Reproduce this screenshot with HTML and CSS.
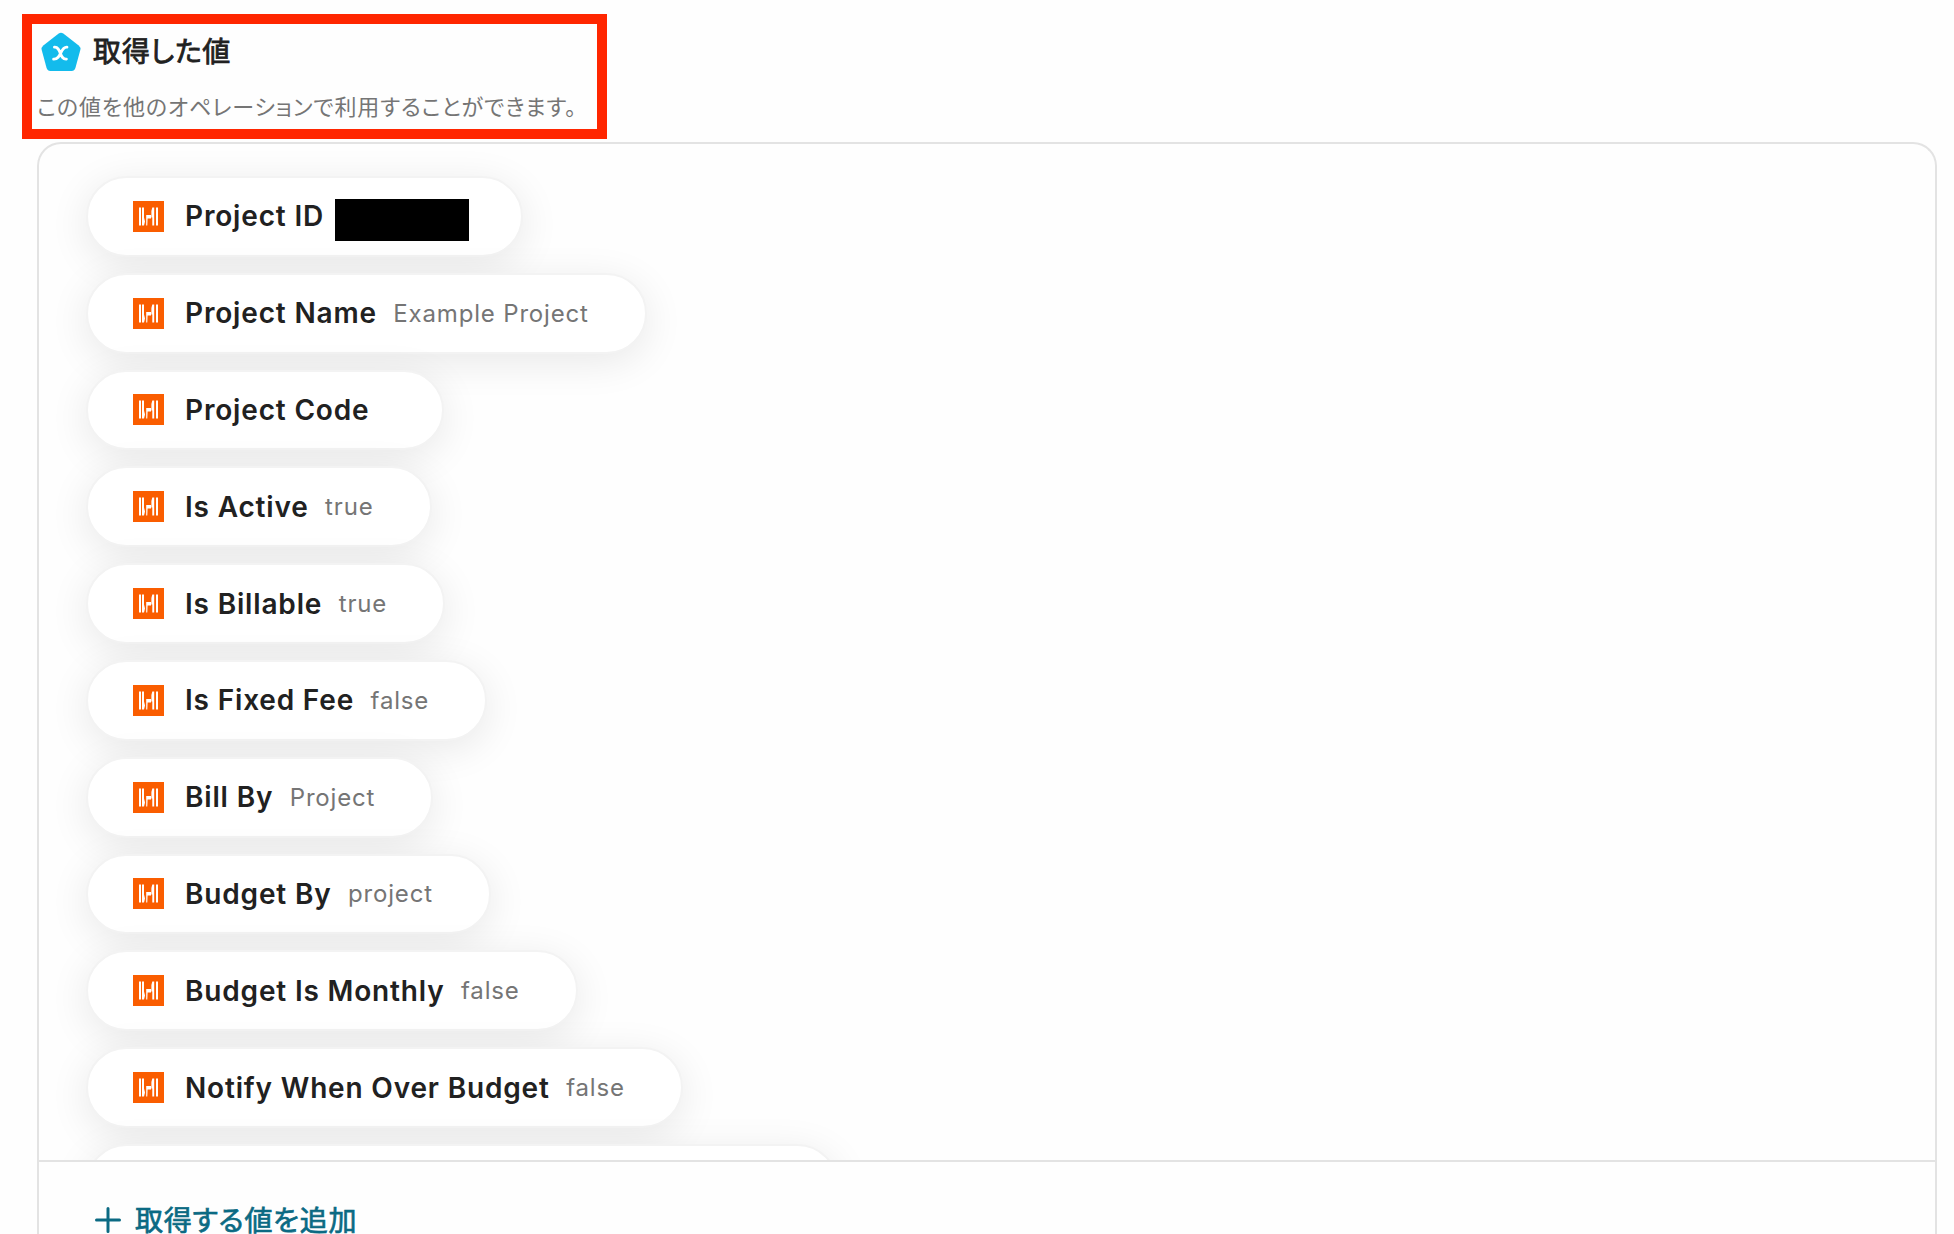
FILE: index.html
```html
<!DOCTYPE html>
<html lang="ja">
<head>
    <meta charset="UTF-8">
    <title>取得した値</title>
    <link rel="stylesheet" href="styles.css">
</head>
<body>
    <!-- Icon shared by every value -->
    <svg class="sprite" width="0" height="0">
        <symbol id="harvest" viewBox="0 0 31 31">
            <rect width="31" height="31" fill="#fa5d00"/>
            <path fill="#fff" d="M6 6.5h2v18H6zM9 6.5h2v10l1 4-1 4H9zM13.2 14h4.8v3.5h-3.4l-.3 7h-1.1zM18.4 10l.9-3.5h1.9v18h-1.9v-8h-.9zM23 6.5h2v18h-2z"/>
        </symbol>
    </svg>

    <div class="header">
        <div class="title">
            <svg class="logo" width="40" height="40" viewBox="0 0 40 40">
                <path fill="#13bbec" d="M17.7 1.6q2.3-1.6 4.6 0l15.4 11.9q2.2 1.8 1.6 4.5l-4.9 18q-.9 2.9-3.8 3H9.4q-2.9-.1-3.8-3L.7 18q-.6-2.7 1.6-4.5z"/>
                <path fill="none" stroke="#fff" stroke-width="2.8" stroke-linecap="round" d="M13.4 15.2c7-.6 4.6 12.4 12 12M26 15.2c-7-.6-5.4 12.4-13.4 12"/>
            </svg>
            <span>取得した値</span>
        </div>
        <div class="description">この値を他のオペレーションで利用することができます。</div>
    </div>

    <div class="card">
        <div class="value-list">
            <div class="value"><svg class="icon"><use href="#harvest"/></svg><b>Project ID</b><span class="masked"></span></div>
            <div class="value"><svg class="icon"><use href="#harvest"/></svg><b>Project Name</b><span>Example Project</span></div>
            <div class="value"><svg class="icon"><use href="#harvest"/></svg><b>Project Code</b><span></span></div>
            <div class="value"><svg class="icon"><use href="#harvest"/></svg><b>Is Active</b><span>true</span></div>
            <div class="value"><svg class="icon"><use href="#harvest"/></svg><b>Is Billable</b><span>true</span></div>
            <div class="value"><svg class="icon"><use href="#harvest"/></svg><b>Is Fixed Fee</b><span>false</span></div>
            <div class="value"><svg class="icon"><use href="#harvest"/></svg><b>Bill By</b><span>Project</span></div>
            <div class="value"><svg class="icon"><use href="#harvest"/></svg><b>Budget By</b><span>project</span></div>
            <div class="value"><svg class="icon"><use href="#harvest"/></svg><b>Budget Is Monthly</b><span>false</span></div>
            <div class="value"><svg class="icon"><use href="#harvest"/></svg><b>Notify When Over Budget</b><span>false</span></div>
            <div class="value value-cut"></div>
        </div>
        <div class="footer">
            <svg width="26" height="26" viewBox="0 0 26 26">
                <path stroke="#0b6a83" stroke-width="3" stroke-linecap="round" d="M13 1.5v23M1.5 13h23"/>
            </svg>
            <span>取得する値を追加</span>
        </div>
    </div>
</body>
</html>
```

FILE: styles.css
```css
* {
    box-sizing: border-box;
}

body {
    margin: 0;
    padding: 14px 17px 0 22px;
    height: 1234px;
    background: #fefefe;
    color: #212121;
    font-family: Inter, "Noto Sans CJK JP", sans-serif;
}

.sprite {
    display: block;
}

/* Header */
.header {
    width: 585px;
    height: 125px;
    padding: 8px 5px 0;
    border: 10px solid #ff2600;
}

.title {
    display: flex;
    align-items: center;
    gap: 12px;
    height: 40px;
    padding-left: 4px;
    font-size: 28px;
    letter-spacing: 0.75px;
    font-feature-settings: "palt";
    -webkit-text-stroke: 0.8px #212121;
}

.title span {
    line-height: 36px;
}

.description {
    margin-top: 18px;
    line-height: 35px;
    font-size: 22px;
    letter-spacing: 0.85px;
    color: #757575;
    white-space: nowrap;
    font-feature-settings: "palt";
}

/* Card */
.card {
    height: 1092px;
    margin: 3px 0 0 15px;
    border: 2px solid #e3e3e3;
    border-bottom: none;
    border-radius: 24px 24px 0 0;
}

.value-list {
    display: flex;
    flex-direction: column;
    align-items: flex-start;
    gap: 16px;
    height: 1018px;
    padding: 32px 0 0 48px;
    overflow: hidden;
    border-bottom: 2px solid #e3e3e3;
}

.value {
    display: flex;
    flex: none;
    align-items: center;
    height: 80.8px;
    padding: 0 56px 0 45px;
    border: 2px solid #f3f3f3;
    border-radius: 41px;
    background: #fff;
    box-shadow: 0 8px 40px rgba(0, 0, 0, 0.09);
    white-space: nowrap;
    margin-left: -1px;
}

.icon {
    width: 31px;
    height: 31px;
    margin-right: 21px;
}

.value b {
    margin-right: 16.5px;
    font-size: 28px;
    font-weight: 600;
    letter-spacing: 0.83px;
}

.value span {
    font-size: 24px;
    letter-spacing: 0.83px;
    color: #757575;
}

.value .masked {
    width: 134px;
    height: 42px;
    margin: 7px -4px 0 -6px;
    background: #000;
}

.value-cut {
    width: 752px;
}

/* Footer */
.footer {
    display: flex;
    align-items: center;
    gap: 14px;
    padding: 38px 56px 0;
    height: 72px;
    line-height: 34px;
    font-size: 28px;
    letter-spacing: 0.75px;
    color: #0b6a83;
    font-feature-settings: "palt";
    -webkit-text-stroke: 0.7px #0b6a83;
}

.footer svg {
    margin-top: 6px;
}

.footer span {
    margin-top: 7px;
    line-height: 28px;
}
```
